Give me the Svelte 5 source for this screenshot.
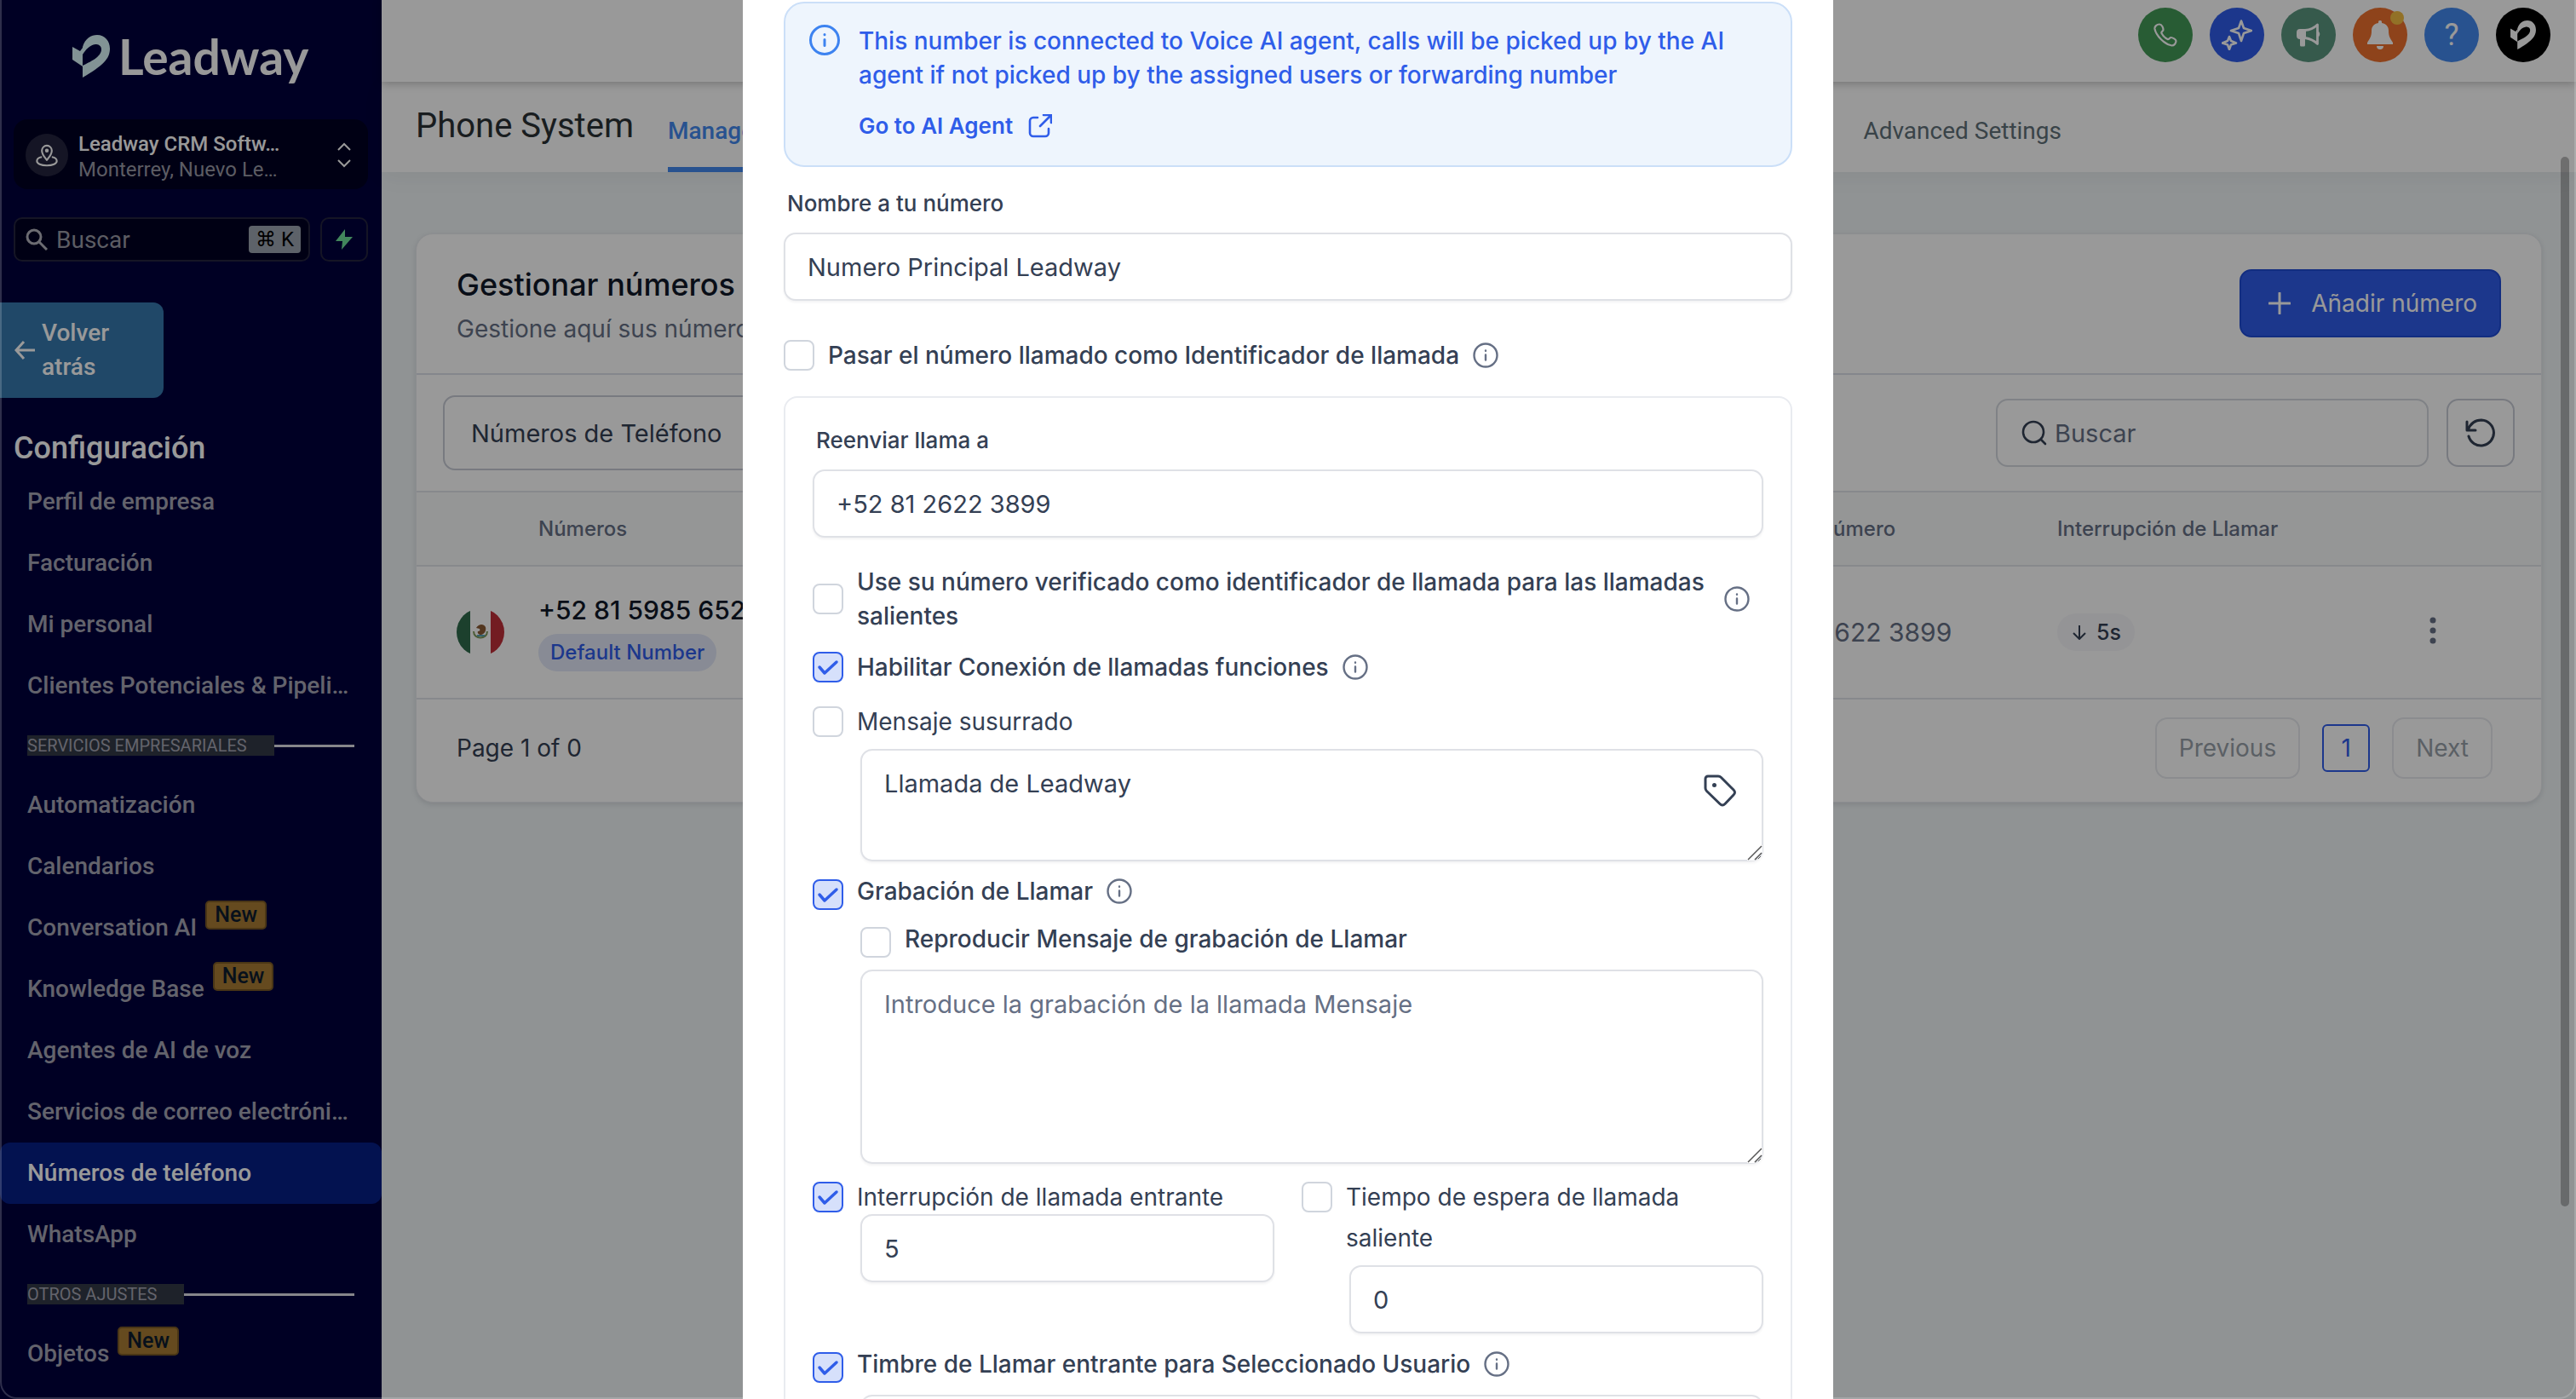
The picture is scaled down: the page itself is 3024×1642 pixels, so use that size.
<script>
  const mainLinks = ["Perfil de empresa", "Facturación", "Mi personal", "Clientes Potenciales & Pipelines"];
  const serviceLinks = [
    { name: "Automatización" },
    { name: "Calendarios" },
    { name: "Conversation AI", isNew: true },
    { name: "Knowledge Base", isNew: true },
    { name: "Agentes de AI de voz" },
    { name: "Servicios de correo electrónico" },
    { name: "Números de teléfono" },
    { name: "WhatsApp" },
  ];
  let activeLink = $state("Números de teléfono");

  let form = $state({
    name: "Numero Principal Leadway",
    passCalled: false,
    forwardTo: "+52 81 2622 3899",
    verified: false,
    connect: true,
    whisper: false,
    whisperText: "Llamada de Leadway",
    record: true,
    playRecord: false,
    recordText: "",
    incoming: true,
    incomingTime: "5",
    outgoing: false,
    outgoingTime: "0",
    ring: true,
    ringTime: "",
  });
</script>

{#snippet mark()}
  <path d="M0 14l9 5 3-4v22L0 29z" />
  <path d="M12 50V36C20 32 34 26 34 17c0-5-4-6-7-6-7 1-11 6-15 12v-9C15 4 22 0 29 0c9 0 15 7 15 16 0 12-8 20-32 34z" />
{/snippet}

{#snippet info()}
  <svg class="info" viewBox="0 0 30 30" fill="none" stroke="currentColor" stroke-width="2.4" stroke-linecap="round">
    <circle cx="15" cy="15" r="13.5" /><path d="M15 14.5v6M15 9.5v.2" />
  </svg>
{/snippet}

{#snippet grip()}
  <svg class="grip" viewBox="0 0 18 18" width="18" height="18" fill="none" stroke="#555" stroke-width="1.500">
    <path fill="#fff" stroke="none" d="M0 0h18v8L8 18H0z" /><path d="M1 17L17 1M9 17l8-8" />
  </svg>
{/snippet}

{#snippet navLink(name, isNew)}
  <a href="#nav" class="nav-link" class:active={activeLink === name} onclick={() => (activeLink = name)}>
    <span class="ellipsis">{name}</span>
    {#if isNew}<span class="new">New</span>{/if}
  </a>
{/snippet}

<div class="app">
  <aside class="sidebar">
    <div class="logo">
      <svg viewBox="0 0 44 50" width="44" height="50">{@render mark()}</svg>
      <span>Leadway</span>
    </div>

    <button class="account">
      <span class="account-icon">
        <svg viewBox="0 0 24 24" width="28" height="28" fill="none" stroke="currentColor" stroke-width="1.8" stroke-linejoin="round">
          <path d="M12 17c-2-2.500-5-5.500-5-9.500a5 5 0 0 1 10 0C17 11.500 14 14.500 12 17z" /><circle cx="12" cy="7.500" r="1" />
          <path d="M7 14c-3 .5-5 2-5 4 0 2.500 4 4.500 10 4.500s10-2 10-4.500c0-2-2-3.500-5-4" />
        </svg>
      </span>
      <span class="account-text">
        <strong>Leadway CRM Softw…</strong>
        <span>Monterrey, Nuevo Le…</span>
      </span>
      <svg viewBox="0 0 16 30" width="16" height="30" fill="none" stroke="currentColor" stroke-width="2">
        <path d="M1 9l7-7 7 7M1 21l7 7 7-7" />
      </svg>
    </button>

    <div class="search-row">
      <label class="side-search">
        <svg viewBox="0 0 26 26" width="26" height="26" fill="none" stroke="currentColor" stroke-width="3">
          <circle cx="10" cy="10" r="8" /><path d="M16 16l9 9" />
        </svg>
        <input type="text" placeholder="Buscar" aria-label="Buscar en el menú" />
        <kbd>⌘ K</kbd>
      </label>
      <button class="bolt" aria-label="Acciones rápidas">
        <svg viewBox="0 0 22 24" width="22" height="24" fill="#6fe09a"><path d="M12 0L1 14h8l-1 10 13-15h-9z" /></svg>
      </button>
    </div>

    <button class="back">
      <svg viewBox="0 0 24 22" width="24" height="22" fill="none" stroke="currentColor" stroke-width="3">
        <path d="M11 1L2 11l9 10M2 11h22" />
      </svg>
      <span>Volver<br />atrás</span>
    </button>

    <h2>Configuración</h2>
    <nav>
      {#each mainLinks as name}
        {@render navLink(name, false)}
      {/each}
      <div class="section"><span>SERVICIOS EMPRESARIALES</span></div>
      {#each serviceLinks as link}
        {@render navLink(link.name, link.isNew)}
      {/each}
      <div class="section"><span>OTROS AJUSTES</span></div>
      {@render navLink("Objetos", true)}
    </nav>
  </aside>

  <main>
    <header class="topbar">
      <button class="round green" aria-label="Llamar">
        <svg viewBox="0 0 28 28" width="28" height="28" fill="none" stroke="currentColor" stroke-width="2.200" stroke-linejoin="round">
          <path d="M7 1.500c3 0 4.500 4.500 4.500 6.500 0 1.500-3 2-2 4 1.500 3 4 5.500 7 7 2 1 2.500-2 4-2 2 0 6 2.500 6 4 0 2.500-2 5.500-5 5.500C12.500 25 3 14.500 1.500 7 1 4 4 1.500 7 1.500z" />
        </svg>
      </button>
      <button class="round blue" aria-label="Asistente AI">
        <svg viewBox="0 0 36 36" width="36" height="36" fill="none" stroke="currentColor" stroke-width="2.600" stroke-linejoin="round">
          <path d="M23 1.500l3 8.500 9 3-9 3-3 9-3-9-9-3 9-3zM9 20l2 5 6 2.500-6 2L9 35l-2-5.500-6-2L7 25z" />
        </svg>
      </button>
      <button class="round teal" aria-label="Novedades">
        <svg viewBox="0 0 28 28" width="28" height="28" fill="currentColor">
          <path d="M4 7h7v12h-1v7a1.500 1.500 0 0 1-1.500 1.500h-3A1.500 1.500 0 0 1 4 26v-7a4 4 0 0 1-4-4v-4a4 4 0 0 1 4-4zM25 9.500c3 1 3 6 0 7z" />
          <path fill="none" stroke="currentColor" stroke-width="2.800" stroke-linejoin="round" d="M10 8.500C16 8 21 5.500 24.500 2v22.500c-3.500-3.500-8.500-6-14.500-7" />
        </svg>
      </button>
      <button class="round orange" aria-label="Notificaciones">
        <svg viewBox="0 0 30 34" width="30" height="34" fill="currentColor">
          <path d="M15 0c2 0 2 1 2 3 6 1 8 5 8 9 0 7 2 9 5 14v2H0v-2c3-5 5-7 5-14 0-4 2-8 8-9 0-2 0-3 2-3zM11 30h8a4 4 0 0 1-8 0z" />
        </svg>
        <i class="dot"></i>
      </button>
      <button class="round sky" aria-label="Ayuda">?</button>
      <button class="round black" aria-label="Perfil">
        <svg viewBox="0 0 44 50" width="30" height="34">{@render mark()}</svg>
      </button>
    </header>

    <div class="subbar">
      <h1>Phone System</h1>
      <nav class="tabs">
        <a href="#numbers" class="tab current">Manage Numbers</a>
        <a href="#advanced" class="tab">Advanced Settings</a>
      </nav>
    </div>

    <section class="card">
      <div class="card-head">
        <div>
          <h3>Gestionar números</h3>
          <p>Gestione aquí sus números</p>
        </div>
        <button class="add">
          <svg viewBox="0 0 26 26" width="26" height="26" stroke="currentColor" stroke-width="3" stroke-linecap="round"><path d="M13 1v24M1 13h24" /></svg>
          Añadir número
        </button>
      </div>

      <div class="filters">
        <select aria-label="Tipo"><option>Números de Teléfono</option></select>
        <div class="filter-right">
          <label class="table-search">
            <svg viewBox="0 0 30 30" width="30" height="30" fill="none" stroke="currentColor" stroke-width="2.600" stroke-linecap="round">
              <circle cx="14" cy="14" r="12" /><path d="M23 23l5 5" />
            </svg>
            <input type="text" placeholder="Buscar" aria-label="Buscar número" />
          </label>
          <button class="refresh" aria-label="Actualizar">
            <svg viewBox="0 0 36 36" width="36" height="36" fill="none" stroke="currentColor" stroke-width="3" stroke-linecap="round" stroke-linejoin="round">
              <path d="M2 5v10h10M3 15C6 7 12 3 19 3a15 15 0 1 1-15 19" />
            </svg>
          </button>
        </div>
      </div>

      <table>
        <thead>
          <tr><th class="c-flag"></th><th>Números</th><th class="c-fwd">Reenviar número</th><th class="c-time">Interrupción de Llamar</th><th class="c-menu"></th></tr>
        </thead>
        <tbody>
          <tr>
            <td class="c-flag">
              <svg class="flag" viewBox="0 0 56 56" width="56" height="56">
                <clipPath id="flag-clip"><circle cx="28" cy="28" r="28" /></clipPath>
                <g clip-path="url(#flag-clip)">
                  <path fill="#fff" d="M0 0h56v56H0z" /><path fill="#2f6b4c" d="M0 0h16v56H0z" /><path fill="#c0303a" d="M40 0h16v56H40z" />
                  <path fill="none" stroke="#7f9a5c" stroke-width="2" d="M20 27c0 10 16 10 16 0" />
                  <path fill="#8a5a34" d="M23 23c3-5 9-5 11-1 1 4-1 8-5 9-3 0-5-2-4-4 2 0 3-1 2-3z" />
                  <path stroke="#5aa3b5" stroke-width="2" d="M24 32h9" />
                </g>
              </svg>
            </td>
            <td>
              <div class="phone">+52 81 5985 6522</div>
              <span class="pill-blue">Default Number</span>
            </td>
            <td class="c-fwd big">+52 81 2622 3899</td>
            <td class="c-time">
              <span class="pill-gray">
                <svg viewBox="0 0 16 18" width="16" height="18" fill="none" stroke="currentColor" stroke-width="2"><path d="M8 1v15M1 10l7 7 7-7" /></svg>
                5s
              </span>
            </td>
            <td class="c-menu">
              <button class="more" aria-label="Más opciones">
                <svg viewBox="0 0 8 32" width="8" height="32" fill="currentColor"><circle cx="4" cy="4" r="3.500" /><circle cx="4" cy="16" r="3.500" /><circle cx="4" cy="28" r="3.500" /></svg>
              </button>
            </td>
          </tr>
        </tbody>
      </table>

      <div class="pager">
        <span>Page 1 of 0</span>
        <div class="pages">
          <button class="page-btn" disabled>Previous</button>
          <button class="page-num">1</button>
          <button class="page-btn" disabled>Next</button>
        </div>
      </div>
    </section>
  </main>

  <i class="scrollbar"></i>

  <div class="overlay">
    <div class="modal" role="dialog" aria-modal="true" aria-label="Editar número">
      <div class="alert">
        <svg viewBox="0 0 38 38" width="38" height="38" fill="none" stroke="#3d83f0" stroke-width="3" stroke-linecap="round">
          <circle cx="19" cy="19" r="16.500" /><path d="M19 18.500v7M19 12.500v.2" />
        </svg>
        <div>
          <p>This number is connected to Voice AI agent, calls will be picked up by the AI agent if not picked up by the assigned users or forwarding number</p>
          <a href="#agent">
            Go to AI Agent
            <svg viewBox="0 0 28 28" width="28" height="28" fill="none" stroke="currentColor" stroke-width="2.600" stroke-linecap="round" stroke-linejoin="round">
              <path d="M11 4H6a4 4 0 0 0-4 4v14a4 4 0 0 0 4 4h14a4 4 0 0 0 4-4v-5M18 1h9v9M27 1L14 14" />
            </svg>
          </a>
        </div>
      </div>

      <label class="title" for="name">Nombre a tu número</label>
      <input id="name" class="field" type="text" bind:value={form.name} />

      <div class="check pass">
        <input id="pass" type="checkbox" bind:checked={form.passCalled} />
        <label for="pass">Pasar el número llamado como Identificador de llamada</label>
        {@render info()}
      </div>

      <div class="group">
        <label class="title" for="forward">Reenviar llama a</label>
        <input id="forward" class="field" type="text" bind:value={form.forwardTo} />

        <div class="check verified">
          <input id="verified" type="checkbox" bind:checked={form.verified} />
          <label for="verified">Use su número verificado como identificador de llamada para las llamadas salientes</label>
          {@render info()}
        </div>

        <div class="check connect">
          <input id="connect" type="checkbox" bind:checked={form.connect} />
          <label for="connect">Habilitar Conexión de llamadas funciones</label>
          {@render info()}
        </div>

        <div class="check light whisper">
          <input id="whisper" type="checkbox" bind:checked={form.whisper} />
          <label for="whisper">Mensaje susurrado</label>
        </div>
        <div class="area-wrap">
          <textarea class="field short" aria-label="Mensaje susurrado" bind:value={form.whisperText}></textarea>
          <button class="tag" aria-label="Insertar etiqueta">
            <svg viewBox="0 0 38 38" width="38" height="38" fill="none" stroke="currentColor" stroke-width="3" stroke-linejoin="round">
              <path d="M2 5a3 3 0 0 1 3-3h12c1.500 0 2.500.5 3.500 1.500L35 18c2 2 2 4 0 6L25 34.500c-2 2-4 2-6 0L3.500 19.500C2.500 18.500 2 17.500 2 16z" />
              <circle cx="12.500" cy="12.500" r="1.500" fill="currentColor" stroke-width="2" />
            </svg>
          </button>
          {@render grip()}
        </div>

        <div class="check low record">
          <input id="record" type="checkbox" bind:checked={form.record} />
          <label for="record">Grabación de Llamar</label>
          {@render info()}
        </div>
        <div class="check low play">
          <input id="play" type="checkbox" bind:checked={form.playRecord} />
          <label for="play">Reproducir Mensaje de grabación de Llamar</label>
        </div>
        <div class="area-wrap tall-wrap">
          <textarea class="field tall" aria-label="Mensaje de grabación" placeholder="Introduce la grabación de la llamada Mensaje" bind:value={form.recordText}></textarea>
          {@render grip()}
        </div>

        <div class="times">
          <div class="time">
            <div class="check light top">
              <input id="incoming" type="checkbox" bind:checked={form.incoming} />
              <label for="incoming">Interrupción de llamada entrante</label>
            </div>
            <input class="field tight" type="text" aria-label="Segundos de llamada entrante" bind:value={form.incomingTime} />
          </div>
          <div class="time">
            <div class="check light top">
              <input id="outgoing" type="checkbox" bind:checked={form.outgoing} />
              <label for="outgoing">Tiempo de espera de llamada saliente</label>
            </div>
            <input class="field" type="text" aria-label="Segundos de llamada saliente" bind:value={form.outgoingTime} />
          </div>
        </div>

        <div class="check low ring">
          <input id="ring" type="checkbox" bind:checked={form.ring} />
          <label for="ring">Timbre de Llamar entrante para Seleccionado Usuario</label>
          {@render info()}
        </div>
        <div class="area-wrap tall-wrap">
          <input class="field" type="text" aria-label="Tiempo de timbre" bind:value={form.ringTime} />
        </div>
      </div>
    </div>
  </div>
  <i class="frame"></i>
</div>

<style>
:global(body) {
  margin: 0;
}

.app, .app * {
  box-sizing: border-box;
}

.app {
  position: relative;
  display: flex;
  height: 100vh;
  overflow: hidden;
  background: #f0f5f7;
  font-family: Inter, sans-serif;
  font-size: 28px;
  color: #344054;
}

button, input, select, textarea {
  font: inherit;
  color: inherit;
}

button {
  border: 0;
  padding: 0;
  background: none;
}

a {
  color: inherit;
  text-decoration: none;
}

h1, h2, h3, p {
  margin: 0;
}

svg {
  flex: none;
}

/* sidebar */
.sidebar {
  width: 448px;
  flex: none;
  background: #00003c;
  color: #fff;
  font-family: Roboto, sans-serif;
}

.logo {
  display: flex;
  align-items: center;
  gap: 10px;
  height: 140px;
  padding: 0 0 8px 85px;
  font: 700 57px/64px Lato, sans-serif;
  color: #fff;

  & svg {
    fill: #d9f5f8;
  }
}

.account {
  display: flex;
  align-items: center;
  width: 416px;
  height: 82px;
  margin: 0 16px;
  padding: 2px 20px 0 14px;
  border-radius: 16px;
  background: #000022;
  text-align: left;
}

.account-icon {
  display: grid;
  place-items: center;
  width: 50px;
  height: 50px;
  border-radius: 50%;
  background: #24243e;
}

.account-text {
  display: flex;
  flex: 1;
  flex-direction: column;
  margin-left: 12px;
  padding-top: 4px;
  font-size: 24px;
  line-height: 30px;
  white-space: nowrap;

  & strong {
    font-weight: 500;
  }

  & span {
    color: #9a9aa6;
  }
}

.search-row {
  display: flex;
  gap: 12px;
  margin: 33px 16px 0;
}

.side-search {
  display: flex;
  flex: 1;
  align-items: center;
  min-width: 0;
  height: 52px;
  padding: 0 9px 0 12px;
  border: 2px solid #24243e;
  border-radius: 10px;
  background: #000022;
  color: #b4b4be;

  & input {
    flex: 1;
    min-width: 0;
    margin-left: 10px;
    padding: 0;
    border: 0;
    background: none;
    font-size: 28px;
  }

  & input::placeholder {
    color: #9a9aa6;
  }

  & kbd {
    flex: none;
    padding: 0 8px;
    border-radius: 4px;
    background: #9ca3af;
    font: 24px/32px Roboto, "DejaVu Sans", sans-serif;
    color: #000;
  }
}

.bolt {
  display: grid;
  place-items: center;
  width: 56px;
  height: 52px;
  border: 2px solid #24243e;
  border-radius: 10px;
}

.back {
  display: flex;
  align-items: center;
  gap: 8px;
  width: 192px;
  height: 112px;
  margin-top: 48px;
  padding-left: 17px;
  border-radius: 0 12px 12px 0;
  background: #3678ae;
  font-weight: 500;
  font-size: 28px;
  line-height: 40px;
  text-align: left;
}

h2 {
  margin: 36px 0 4px 16px;
  font-weight: 500;
  font-size: 36px;
  line-height: 46px;
}

.nav-link {
  display: flex;
  align-items: center;
  gap: 10px;
  height: 72px;
  padding: 0 36px 0 32px;
  border-radius: 12px;
  font-weight: 500;
  font-size: 28px;
  line-height: 36px;
  color: #a6a6b4;

  &.active {
    background: #061e86;
    color: #fff;
  }
}

.ellipsis {
  overflow: hidden;
  text-overflow: ellipsis;
  white-space: nowrap;
}

.new {
  height: 34px;
  margin-bottom: 30px;
  padding: 0 9px;
  border: 2px solid #7c5a26;
  border-radius: 5px;
  background: #a87c34;
  font-size: 25px;
  line-height: 30px;
  color: #0d1b2e;
}

.section {
  display: flex;
  align-items: center;
  height: 24px;
  margin: 22px 32px;
  font-weight: 400;
  font-size: 20px;
  line-height: 24px;
  color: #a6a6b4;

  & span {
    padding-right: 32px;
    background: #323a46;
  }

  &::after {
    content: "";
    flex: 1;
    height: 3px;
    background: #e0e0e8;
  }
}

/* page */
main {
  flex: 1;
  min-width: 0;
}

.topbar {
  position: relative;
  display: flex;
  justify-content: flex-end;
  gap: 20px;
  height: 96px;
  padding: 9px 30px 0 0;
  background: #fff;
  box-shadow: 0 2px 10px rgba(0, 0, 0, 0.25);
}

.round {
  position: relative;
  display: grid;
  place-items: center;
  width: 64px;
  height: 64px;
  border-radius: 50%;
  color: #fff;
  fill: #fff;

  &.green { background: #449957; }
  &.blue { background: #2f5de9; }
  &.teal { background: #5a967f; }
  &.orange { background: #ed702d; }
  &.sky { background: #4389ee; font: 400 36px/64px Roboto, sans-serif; }
  &.black { background: #000; }
}

.dot {
  position: absolute;
  top: 4px;
  right: 4px;
  width: 16px;
  height: 16px;
  border-radius: 50%;
  background: #f3bd41;
}

.subbar {
  display: flex;
  height: 106px;
  padding-left: 40px;
  background: #fff;
  box-shadow: 0 6px 24px rgba(0, 0, 0, 0.05);
  font-family: Roboto, sans-serif;

  & h1 {
    width: 296px;
    font-weight: 400;
    font-size: 40px;
    line-height: 104px;
    color: #2a3135;
  }
}

.tabs {
  display: flex;
  flex: 1;
  justify-content: space-between;
  padding-right: 604px;
}

.tab {
  height: 106px;
  font-size: 28px;
  line-height: 116px;
  color: #607179;

  &.current {
    border-bottom: 6px solid #4389ee;
    font-weight: 500;
    color: #4389ee;
  }
}

.card {
  margin: 72px 40px 0;
  border: 1px solid #eaecf0;
  border-radius: 20px;
  background: #fff;
  box-shadow: 0 2px 6px rgba(16, 24, 40, 0.12);
  overflow: hidden;
}

.card-head {
  display: flex;
  justify-content: space-between;
  align-items: flex-start;
  height: 165px;
  padding: 34px 47px 0;
  border-bottom: 2px solid #dddfea;

  & h3 {
    font-weight: 500;
    font-size: 36px;
    line-height: 50px;
    color: #101828;
  }

  & p {
    line-height: 54px;
    color: #667085;
  }
}

.add {
  display: flex;
  align-items: center;
  gap: 24px;
  height: 80px;
  margin-top: 7px;
  padding: 0 26px 0 32px;
  border: 2px solid #1f4bd6;
  border-radius: 14px;
  background: #2f5de9;
  color: #fff;
}

.filters {
  display: flex;
  justify-content: space-between;
  align-items: center;
  height: 138px;
  padding: 0 31px;
  border-bottom: 2px solid #e2e4ea;

  & select {
    appearance: none;
    width: 420px;
    height: 88px;
    padding: 0 31px;
    border: 2px solid #c8ccd6;
    border-radius: 14px;
    background: #fff;
    font-size: 29px;
  }
}

.filter-right {
  display: flex;
  gap: 21px;
}

.table-search {
  display: flex;
  align-items: center;
  gap: 9px;
  width: 508px;
  height: 80px;
  padding-left: 28px;
  border: 2px solid #d5d9e0;
  border-radius: 14px;

  & input {
    width: 400px;
    padding: 0;
    border: 0;
    font-size: 29px;
  }

  & input::placeholder {
    color: #667085;
  }
}

.refresh {
  display: grid;
  place-items: center;
  width: 80px;
  height: 80px;
  border: 2px solid #c8ccd6;
  border-radius: 14px;
}

table {
  width: 100%;
  border-collapse: collapse;
  table-layout: fixed;
  text-align: left;
}

th {
  height: 86px;
  padding: 0;
  border-bottom: 2px solid #e2e4ea;
  background: #f9fafb;
  font-weight: 500;
  font-size: 24px;
  color: #667085;
}

td {
  height: 156px;
  padding: 0;
  border-bottom: 2px solid #e2e4ea;
}

.c-flag { width: 143px; padding-left: 47px; }
.c-fwd { width: 384px; }
.c-time { width: 390px; }
.c-menu { width: 178px; }

.flag {
  display: block;
}

.big {
  font-size: 30px;
  color: #667085;
}

.phone {
  margin-bottom: 8px;
  line-height: 40px;
  font-weight: 500;
  font-size: 30px;
  color: #101828;
}

.pill-blue {
  display: inline-block;
  padding: 0 14px;
  border-radius: 22px;
  background: #e3e8f8;
  font-weight: 500;
  font-size: 24px;
  line-height: 44px;
  color: #2f5de9;
}

.pill-gray {
  display: inline-flex;
  align-items: center;
  gap: 12px;
  padding: 0 16px 0 18px;
  border-radius: 22px;
  background: #f7f7fb;
  font-weight: 500;
  font-size: 25px;
  line-height: 44px;
}

.more {
  display: block;
  padding: 2px 47px 0;
  color: #667085;
}

.pager {
  display: flex;
  justify-content: space-between;
  align-items: center;
  height: 120px;
  padding: 0 57px 6px 47px;
}

.pages {
  display: flex;
  align-items: center;
  gap: 26px;
}

.page-btn {
  height: 72px;
  padding: 0 26px;
  border: 2px solid #e8eaee;
  border-radius: 14px;
  color: #98a0a9;
}

.page-num {
  width: 56px;
  height: 56px;
  border: 2px solid #2f5de9;
  border-radius: 6px;
  color: #2f5de9;
}

.scrollbar {
  position: absolute;
  top: 184px;
  right: 8px;
  width: 10px;
  height: 75%;
  border-radius: 5px;
  background: rgba(0, 0, 0, 0.28);
}

/* modal */
.overlay {
  position: absolute;
  inset: 0;
  display: flex;
  justify-content: center;
  background: rgba(0, 0, 0, 0.4);
}

.modal {
  width: 1280px;
  padding: 2px 48px 0;
  background: #fff;
  overflow: hidden;
}

.alert {
  display: flex;
  align-items: flex-start;
  gap: 21px;
  height: 194px;
  padding: 24px 48px 0 27px;
  border: 2px solid #cbdff8;
  border-radius: 24px;
  background: #eef5fd;
  font-weight: 500;
  font-size: 28px;
  line-height: 40px;
  color: #2f5de9;

  & a {
    display: flex;
    align-items: center;
    gap: 18px;
    margin-top: 20px;
    font-weight: 600;
    font-size: 26px;
  }
}

.title {
  display: block;
  margin: 23px 4px 14px;
  font-weight: 500;
  font-size: 26px;
  line-height: 40px;
}

.field {
  display: block;
  width: 100%;
  height: 80px;
  margin: 0;
  padding: 0 26px;
  border: 2px solid #dfe1e6;
  border-radius: 14px;
  background: #fff;
  box-shadow: 0 2px 3px rgba(16, 24, 40, 0.05);
  font-size: 29px;

  &::placeholder {
    color: #667085;
  }
}

textarea.field {
  padding-top: 16px;
  line-height: 46px;
}

.short { height: 132px; }
.tall { height: 228px; }

.check {
  display: flex;
  align-items: center;
  gap: 16px;
  font-weight: 500;
  line-height: 40px;

  & input {
    flex: none;
    appearance: none;
    width: 36px;
    height: 36px;
    margin: 0;
    border: 2px solid #d0d5dd;
    border-radius: 8px;
    background: #fff;
  }

  & input:checked {
    border-color: #2f5de9;
    background: #d6e0fb url('data:image/svg+xml,<svg xmlns="http://www.w3.org/2000/svg" viewBox="0 0 32 32"><path d="M6 16l6 7L26 10" fill="none" stroke="%232f5de9" stroke-width="3.500" stroke-linecap="round" stroke-linejoin="round"/></svg>') center / 32px;
  }

  &.light {
    font-weight: 400;
    font-size: 28px;
    line-height: 48px;
  }

  &.low label, &.low .info {
    margin-bottom: 8px;
    line-height: 36px;
  }
}

.info {
  width: 30px;
  height: 30px;
  color: #667085;
}

.pass { margin-top: 44px; }

.group {
  margin-top: 28px;
  padding: 30px 32px;
  border: 2px solid #e9ebf0;
  border-radius: 16px;

  & .title {
    margin-top: 0;
  }
}

.verified {
  margin-top: 32px;
  padding-right: 16px;
}

.connect, .whisper { margin-top: 20px; }
.record { margin-top: 17px; }
.ring { margin-top: 18px; }

.play {
  margin: 12px 0 0 56px;
}

.area-wrap {
  position: relative;
  margin: 8px 0 0 56px;
}

.tall-wrap {
  margin-top: 10px;
}

.tag {
  position: absolute;
  top: 30px;
  right: 32px;
}

.grip {
  position: absolute;
  right: 1px;
  bottom: 1px;
  pointer-events: none;
}

.times {
  display: grid;
  grid-template-columns: 1fr 1fr;
  gap: 32px;
  margin-top: 15px;
}

.time .field {
  width: calc(100% - 56px);
  margin: 8px 0 0 56px;

  &.tight {
    margin-top: -4px;
  }
}

.top {
  align-items: flex-start;

  & input {
    margin-top: 6px;
  }
}

/* window edge */
.frame {
  position: absolute;
  inset: -2px 0 0;
  border: 2px solid rgba(255, 255, 255, 0.18);
  border-radius: 0 0 20px 20px;
  pointer-events: none;
}
</style>
